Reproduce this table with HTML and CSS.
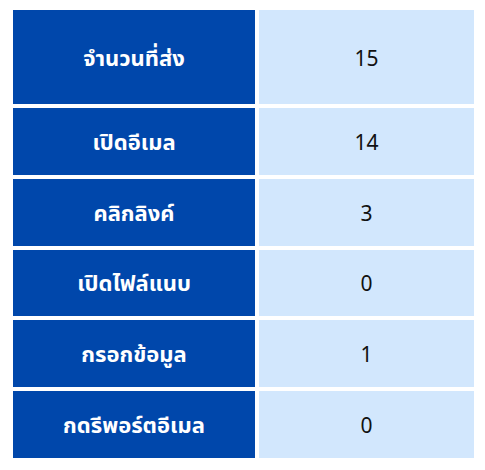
FILE: index.html
```html
<!DOCTYPE html>
<html lang="th">
<head>
<meta charset="utf-8">
<link rel="stylesheet" href="styles.css">
</head>
<body>
<div class="stats">
  <div class="label">จำนวนที่ส่ง</div><div class="value">15</div>
  <div class="label">เปิดอีเมล</div><div class="value">14</div>
  <div class="label">คลิกลิงค์</div><div class="value">3</div>
  <div class="label">เปิดไฟล์แนบ</div><div class="value">0</div>
  <div class="label">กรอกข้อมูล</div><div class="value">1</div>
  <div class="label">กดรีพอร์ตอีเมล</div><div class="value">0</div>
</div>
</body>
</html>
```
FILE: styles.css
```css
html, body {
  margin: 0;
  padding: 0;
  background: #ffffff;
}
body {
  padding: 10px 0 0 13px;
  font-family: "Noto Sans Thai", "Noto Sans", "DejaVu Sans", sans-serif;
}
.stats {
  display: grid;
  grid-template-columns: 242px 215px;
  grid-template-rows: 94px repeat(5, 66.8px);
  gap: 4px;
}
.label, .value {
  display: flex;
  align-items: center;
  justify-content: center;
  padding-top: 4px;
}
.label {
  background: #0047ab;
  color: #ffffff;
  font-weight: 700;
  font-size: 22px;
}
.value {
  background: #d2e7fd;
  color: #111111;
  font-size: 21px;
}
```
